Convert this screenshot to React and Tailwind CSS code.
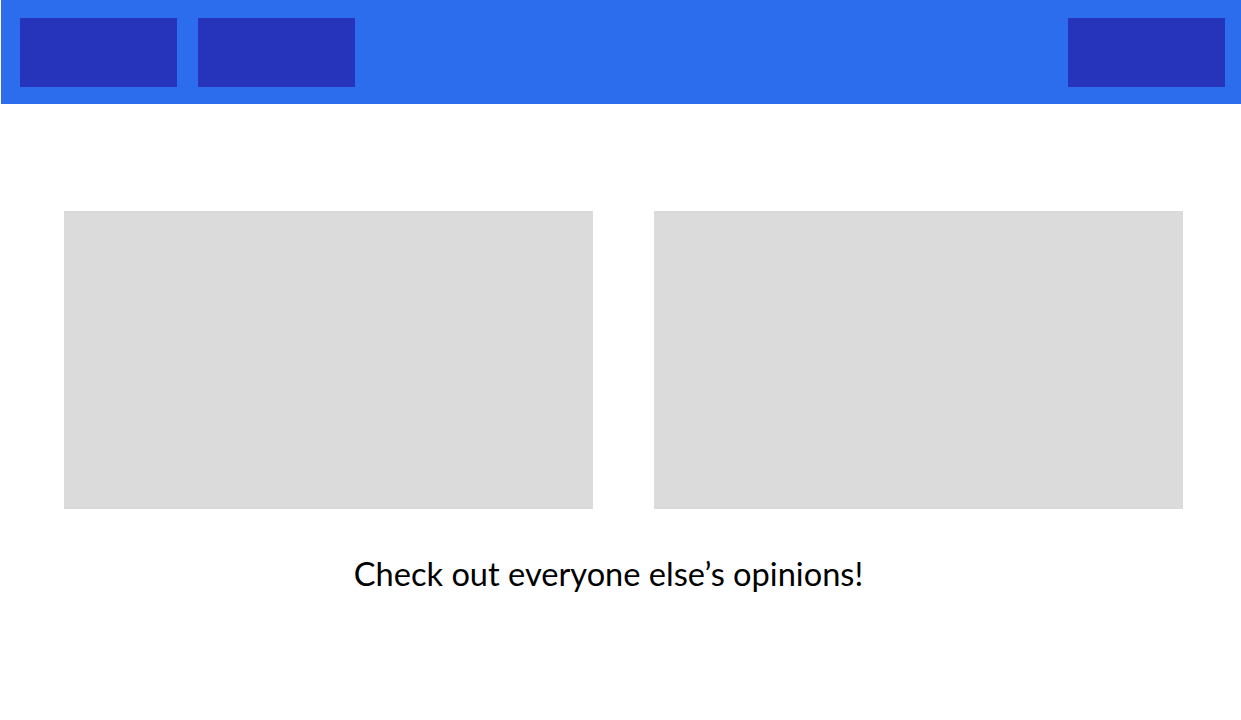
import React from 'react';

const NavButton = () => <div className="h-[69px] w-[157px] bg-[#2634bb]" />;

const App = () => {
  return (
    <div className="min-h-[720px] w-[1241px] bg-white" style={{ fontFamily: '"Lato", "Liberation Sans", sans-serif' }}>
      <header className="ml-px flex h-[104px] items-start justify-between bg-[#2c6dee] pl-[19px] pr-[16px] pt-[18px]">
        <div className="flex gap-[21px]">
          <NavButton />
          <NavButton />
        </div>
        <NavButton />
      </header>
      <main className="pt-[107px]">
        <div className="flex gap-[61px] pl-[64px]">
          <div className="h-[298px] w-[529px] bg-[#dbdbdb]" />
          <div className="h-[298px] w-[529px] bg-[#dbdbdb]" />
        </div>
        <p className="mt-[45px] pr-[24px] text-center text-[32.6px] leading-[40px] text-black">
          Check out everyone else’s opinions!
        </p>
      </main>
    </div>
  );
};

export default App;
